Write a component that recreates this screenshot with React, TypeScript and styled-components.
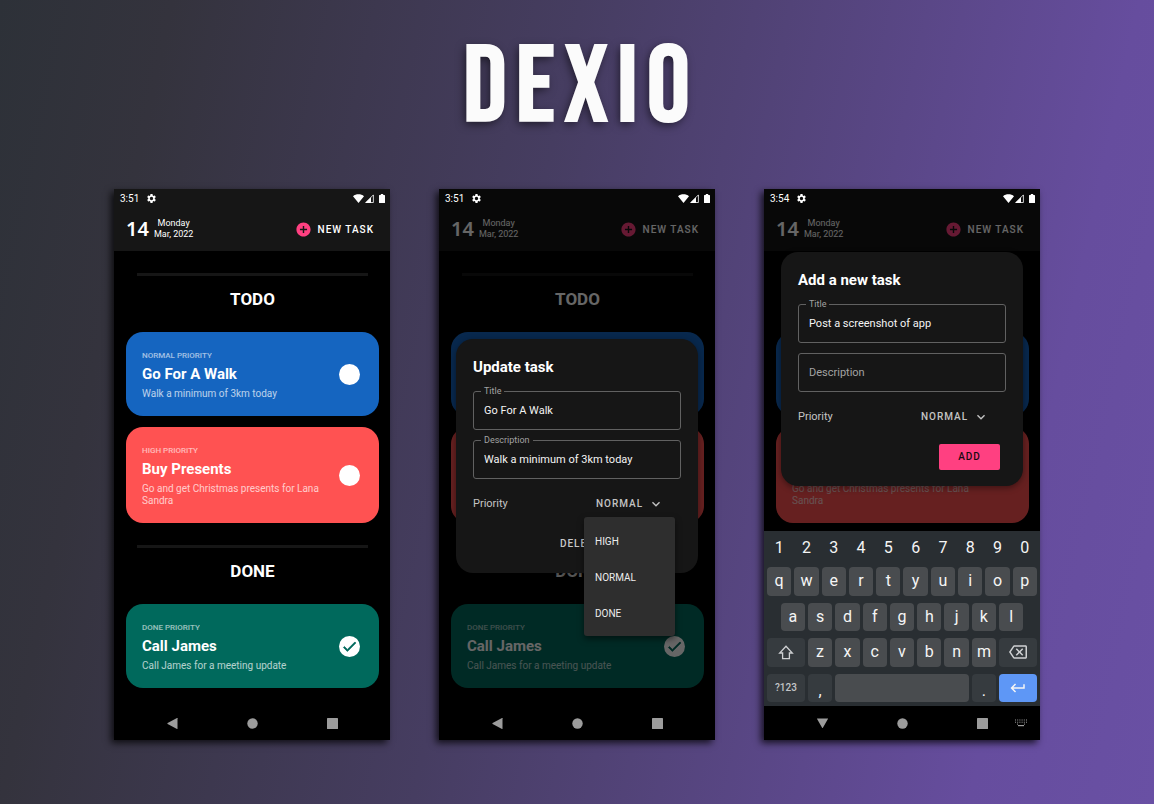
import React, { useId } from 'react';
import styled, { createGlobalStyle, css } from 'styled-components';
import {
  MdSettings,
  MdAddCircle,
  MdExpandMore,
  MdOutlineBackspace,
  MdKeyboardReturn,
  MdCheck,
} from 'react-icons/md';

const GlobalStyle = createGlobalStyle`
  *, *::before, *::after { box-sizing: border-box; }
  body {
    margin: 0;
    font-family: Roboto, "Liberation Sans", sans-serif;
    color: #fff;
  }
  h1, h2, h3, p { margin: 0; }
  button, input, select { font: inherit; color: inherit; margin: 0; padding: 0; border: 0; background: none; }
  svg { display: block; flex: none; }
`;

const Page = styled.main`
  min-height: 100vh;
  padding: 34px 16px 64px;
  background: linear-gradient(102deg, #2d3138 0%, #34333d 13%, #463d61 44%, #664d9e 86%, #6950a4 100%);
`;

const Brand = styled.h1`
  padding-bottom: 45px;
  padding-left: 8px;
  text-align: center;
  font-family: "Bebas Neue", "Liberation Sans Narrow", "Roboto Condensed", "Liberation Sans", sans-serif;
  font-size: 108px;
  font-weight: 400;
  line-height: 110px;
  letter-spacing: 9px;
  color: #fbfbfb;
  -webkit-text-stroke: 2px #fbfbfb;
  text-shadow: -2px 3px 10px rgba(0, 0, 0, 0.6);
`;

const Phones = styled.div`
  display: grid;
  grid-template-columns: repeat(3, minmax(0, 276px));
  justify-content: center;
  column-gap: 49px;
`;

const PhoneFrame = styled.section`
  position: relative;
  display: flex;
  flex-direction: column;
  overflow: hidden;
  background: #000;
`;

const PhoneShadow = styled.div`
  display: grid;
  box-shadow: -3px 3px 7px rgba(0, 0, 0, 0.75);
`;

const StatusBar = styled.div`
  position: relative;
  z-index: 2;
  display: flex;
  align-items: center;
  justify-content: space-between;
  height: 18px;
  padding: 0 5px 0 6px;
  font-size: 10px;
`;

const StatusGroup = styled.div<{ $gap: number }>`
  display: flex;
  align-items: center;
  gap: ${(p) => p.$gap}px;
`;

const TopPanel = styled.div`
  background: #161616;
  margin-top: -18px;
  padding-top: 18px;
`;

const AppBar = styled.header`
  display: flex;
  align-items: center;
  justify-content: space-between;
  height: 44px;
  padding: 0 16px 0 12px;
`;

const DateBlock = styled.div`
  display: flex;
  align-items: center;
  gap: 5px;
`;

const DayNumber = styled.span`
  font-family: "Noto Sans", sans-serif;
  font-size: 20px;
  font-weight: 600;
  line-height: 24px;
`;

const DateText = styled.span`
  display: grid;
  font-size: 9px;
  line-height: 11px;
  text-align: center;
`;

const NewTaskButton = styled.button`
  display: flex;
  align-items: center;
  gap: 6px;
  font-size: 10px;
  font-weight: 500;
  letter-spacing: 1px;
  svg { color: #ff4081; }
`;

const Board = styled.div`
  flex: 1;
  padding: 22px 11px 18px 12px;
`;

const Divider = styled.hr`
  height: 3px;
  margin: 0 11px;
  border: 0;
  background: #161616;
`;

const SectionTitle = styled.h2`
  padding: 12px 0 22px;
  font-size: 17px;
  font-weight: 700;
  line-height: 22px;
  text-align: center;
`;

const Cards = styled.div`
  display: grid;
  gap: 11px;
  & + ${Divider} { margin-top: 22px; }
`;

const Card = styled.article<{ $color: string }>`
  display: flex;
  align-items: center;
  justify-content: space-between;
  gap: 16px;
  padding: 17px 19px 16px 16px;
  border-radius: 17px;
  background: ${(p) => p.$color};
  color: ${(p) => p.$color};
`;

const CardText = styled.div`
  display: grid;
  color: #fff;
`;

const CardPriority = styled.p`
  font-size: 8px;
  font-weight: 500;
  line-height: 14px;
  opacity: 0.6;
`;

const CardTitle = styled.h3`
  font-size: 15px;
  font-weight: 700;
  line-height: 22px;
`;

const CardDescription = styled.p`
  padding-top: 3px;
  font-size: 10px;
  line-height: 12px;
  opacity: 0.7;
`;

const Tick = styled.span`
  display: grid;
  place-items: center;
  > * { grid-area: 1 / 1; }
  svg { pointer-events: none; }
  svg path:not([fill='none']) { stroke: currentColor; stroke-width: 1; }
`;

const TickBox = styled.input`
  appearance: none;
  width: 21px;
  height: 21px;
  border-radius: 50%;
  background: #fff;
`;

const NavBar = styled.nav`
  position: relative;
  z-index: 2;
  display: grid;
  grid-template-columns: 1fr auto 1fr;
  align-items: center;
  height: 34px;
  padding-right: 13px;
  padding-left: 13px;
  background: #000;
  color: #9c9c9c;
`;

const NavButtons = styled.div`
  display: flex;
  grid-column: 2;
  gap: 69px;
`;

const IconButton = styled.button`
  display: grid;
  justify-self: end;
`;

const Scrim = styled.div`
  position: absolute;
  inset: 0;
  z-index: 1;
  display: grid;
  background: rgba(0, 0, 0, 0.6);
`;

const DialogArea = styled.div<{ $keyboard: boolean }>`
  display: grid;
  align-items: center;
  padding: 18px 17px ${(p) => (p.$keyboard ? 210 : 36)}px;
`;

const Dialog = styled.div`
  padding: 18px 17px 16px;
  border-radius: 17px;
  background: #161616;
  box-shadow: 0 2px 6px rgba(0, 0, 0, 0.4);
`;

const DialogTitle = styled.h2`
  margin-bottom: 14px;
  font-size: 15px;
  font-weight: 700;
  line-height: 20px;
`;

const Fields = styled.div`
  display: grid;
  gap: 10px;
`;

const Field = styled.div`
  position: relative;
  display: grid;
`;

const FieldLabel = styled.label`
  position: absolute;
  top: -5px;
  left: 8px;
  padding: 0 3px;
  background: #161616;
  color: #a2a2a2;
  font-size: 9px;
  line-height: 10px;
`;

const FieldInput = styled.input`
  width: 100%;
  height: 39px;
  padding: 1px 10px 0;
  border: 1px solid #616161;
  border-radius: 3px;
  font-size: 11px;
  color: #f4f4f4;
  &::placeholder { color: #a2a2a2; opacity: 1; }
`;

const PriorityRow = styled.div`
  display: flex;
  align-items: center;
  justify-content: space-between;
  padding: 12px 6px 14px 0;
  font-size: 11px;
  color: #c4c4c4;
`;

const PriorityControl = styled.div`
  position: relative;
  display: grid;
  align-items: center;
  width: 91px;
  > select, > svg { grid-area: 1 / 1; }
  > svg { justify-self: end; margin-right: 11px; pointer-events: none; }
`;

const PrioritySelect = styled.select`
  appearance: none;
  height: 26px;
  padding-left: 12px;
  font-size: 10px;
  font-weight: 500;
  letter-spacing: 1px;
`;

const Menu = styled.ul`
  position: absolute;
  top: 100%;
  left: 0;
  right: 0;
  margin: 0;
  padding: 7px 0 4px;
  list-style: none;
  border-radius: 3px;
  background: #2e2e2e;
  box-shadow: 0 3px 6px rgba(0, 0, 0, 0.5);
`;

const MenuItem = styled.li`
  padding-left: 11px;
  font-size: 10px;
  line-height: 36px;
  color: #ececec;
`;

const Actions = styled.div`
  display: grid;
  grid-template-columns: 1fr 61px;
  column-gap: 13px;
  padding-right: 6px;
`;

const ActionButton = styled.button<{ $primary?: boolean }>`
  height: 26px;
  border-radius: 2px;
  font-size: 10px;
  font-weight: 500;
  letter-spacing: 1px;
  ${(p) =>
    p.$primary
      ? css`
          grid-column: 2;
          background: #ff4081;
          color: #1a0a10;
        `
      : css`
          justify-self: end;
          color: #c8c8c8;
        `}
`;

const Keyboard = styled.div`
  position: absolute;
  z-index: 2;
  right: 0;
  bottom: 34px;
  left: 0;
  display: grid;
  grid-template-rows: 24px repeat(4, 1fr);
  gap: 7px;
  height: 175px;
  padding: 5px 3px 4px;
  background: #292e32;
`;

const KeyRow = styled.div`
  display: grid;
  grid-template-columns: repeat(20, 1fr);
  column-gap: 3px;
`;

const tones = {
  plain: 'transparent',
  letter: '#494c4f',
  special: '#363b3f',
  enter: '#5e97f6',
};

const Key = styled.button<{ $span?: number; $start?: number; $tone?: keyof typeof tones }>`
  display: grid;
  place-items: center;
  min-width: 0;
  grid-column: ${(p) => p.$start ?? 'auto'} / span ${(p) => p.$span ?? 2};
  border-radius: 4px;
  background: ${(p) => tones[p.$tone ?? 'letter']};
  font-size: 16px;
  line-height: 16px;
  color: #f5f5f5;
`;

const SymbolsKey = styled(Key)`
  font-size: 10px;
  font-weight: 500;
  color: #c3c5c7;
`;

const PunctuationKey = styled(Key)`
  padding-top: 6px;
`;

type Task = { level: string; title: string; text: string; color: string; done?: boolean };

const todo: Task[] = [
  { level: 'NORMAL PRIORITY', title: 'Go For A Walk', text: 'Walk a minimum of 3km today', color: '#1565c0' },
  { level: 'HIGH PRIORITY', title: 'Buy Presents', text: 'Go and get Christmas presents for Lana Sandra', color: '#ff5252' },
];

const done: Task[] = [
  { level: 'DONE PRIORITY', title: 'Call James', text: 'Call James for a meeting update', color: '#00695c', done: true },
];

const WifiIcon = () => (
  <svg width="11" height="9" viewBox="0 0 11 9" fill="#fff" aria-hidden="true">
    <path d="M0 2.2C3 -.4 8 -.4 11 2.2L5.5 9Z" />
  </svg>
);

const SignalIcon = () => (
  <svg width="9" height="9" viewBox="0 0 9 9" aria-hidden="true">
    <path d="M.8 8.5H8.4V.9Z" fill="none" stroke="#fff" strokeWidth="0.8" />
    <path d="M.2 9H6V3.2Z" fill="#fff" />
  </svg>
);

const BatteryIcon = () => (
  <svg width="6" height="9" viewBox="0 0 6 9" fill="#fff" aria-hidden="true">
    <path d="M1.8 0h2.4v1H5.4q.6 0 .6.6v6.8q0 .6-.6.6H.6Q0 9 0 8.4V1.6Q0 1 .6 1h1.2Z" />
  </svg>
);

const BackIcon = ({ down }: { down?: boolean }) => (
  <svg width="11" height="11" viewBox="0 0 11 11" fill="currentColor" aria-hidden="true">
    <path d={down ? 'M.2 .4H10.8Q11.2 .5 10.9 .9L5.9 9.8Q5.5 10.3 5.1 9.8L.1 .9Q-.1 .5 .2 .4Z' : 'M10.5 .2V10.8Q10.4 11.1 10 10.9L.6 5.9Q.2 5.5 .6 5.1L10 .1Q10.4 -.1 10.5 .2Z'} />
  </svg>
);

const HomeIcon = () => (
  <svg width="11" height="11" viewBox="0 0 11 11" fill="currentColor" aria-hidden="true">
    <circle cx="5.5" cy="5.5" r="5.2" />
  </svg>
);

const RecentsIcon = () => (
  <svg width="11" height="11" viewBox="0 0 11 11" fill="currentColor" aria-hidden="true">
    <rect width="11" height="11" rx="0.6" />
  </svg>
);

const KeyboardIcon = () => (
  <svg width="12" height="8" viewBox="0 0 12 8" fill="currentColor" aria-hidden="true">
    {[0, 2.2, 4.4, 6.6, 8.8, 11].map((x) => (
      <g key={x}>
        <rect x={x} y="0.5" width="1" height="1" />
        <rect x={x} y="2.7" width="1" height="1" />
      </g>
    ))}
    <rect x="2" y="4.6" width="1" height="1" />
    <rect x="9" y="4.6" width="1" height="1" />
    <rect x="3" y="6" width="6" height="1.2" />
  </svg>
);

const ShiftIcon = () => (
  <svg width="16" height="15" viewBox="0 0 16 15" fill="none" stroke="#cfd1d3" strokeWidth="1.3" strokeLinejoin="miter" aria-hidden="true">
    <path d="M8 1.3L14.3 8H11.4V13.7H4.6V8H1.7Z" />
  </svg>
);

function TaskCard({ task }: { task: Task }) {
  return (
    <Card $color={task.color}>
      <CardText>
        <CardPriority>{task.level}</CardPriority>
        <CardTitle>{task.title}</CardTitle>
        <CardDescription>{task.text}</CardDescription>
      </CardText>
      <Tick>
        <TickBox type="checkbox" aria-label={task.title} defaultChecked={task.done} />
        {task.done && <MdCheck size={17} />}
      </Tick>
    </Card>
  );
}

function TextField({ label, value }: { label: string; value?: string }) {
  const id = useId();
  return (
    <Field>
      {value && <FieldLabel htmlFor={id}>{label}</FieldLabel>}
      <FieldInput id={id} type="text" defaultValue={value} placeholder={label} aria-label={label} />
    </Field>
  );
}

function PriorityField({ open }: { open?: boolean }) {
  const id = useId();
  return (
    <PriorityRow>
      <label htmlFor={id}>Priority</label>
      <PriorityControl>
        <PrioritySelect id={id} defaultValue="NORMAL">
          <option>HIGH</option>
          <option>NORMAL</option>
          <option>DONE</option>
        </PrioritySelect>
        <MdExpandMore size={16} />
        {open && (
          <Menu>
            <MenuItem>HIGH</MenuItem>
            <MenuItem>NORMAL</MenuItem>
            <MenuItem>DONE</MenuItem>
          </Menu>
        )}
      </PriorityControl>
    </PriorityRow>
  );
}

function SoftKeyboard() {
  const letters = (row: string, start?: number) =>
    row.split('').map((c, i) => (
      <Key key={c} $start={i === 0 ? start : undefined}>
        {c}
      </Key>
    ));
  return (
    <Keyboard>
      <KeyRow>
        {'1234567890'.split('').map((c) => (
          <Key key={c} $tone="plain">
            {c}
          </Key>
        ))}
      </KeyRow>
      <KeyRow>{letters('qwertyuiop')}</KeyRow>
      <KeyRow>{letters('asdfghjkl', 2)}</KeyRow>
      <KeyRow>
        <Key $span={3} $tone="special" aria-label="Shift">
          <ShiftIcon />
        </Key>
        {letters('zxcvbnm')}
        <Key $span={3} $tone="special" aria-label="Backspace">
          <MdOutlineBackspace size={18} color="#cfd1d3" />
        </Key>
      </KeyRow>
      <KeyRow>
        <SymbolsKey $span={3} $tone="special">
          ?123
        </SymbolsKey>
        <PunctuationKey $tone="special">,</PunctuationKey>
        <Key $span={10} aria-label="Space" />
        <PunctuationKey $tone="special">.</PunctuationKey>
        <Key $span={3} $tone="enter" aria-label="Enter">
          <MdKeyboardReturn size={18} />
        </Key>
      </KeyRow>
    </Keyboard>
  );
}

function Section({ title, tasks }: { title: string; tasks: Task[] }) {
  return (
    <>
      <Divider />
      <SectionTitle>{title}</SectionTitle>
      <Cards>
        {tasks.map((t) => (
          <TaskCard key={t.title} task={t} />
        ))}
      </Cards>
    </>
  );
}

function Phone({ time, keyboard = false, children }: { time: string; keyboard?: boolean; children?: React.ReactNode }) {
  return (
    <PhoneShadow>
      <PhoneFrame>
        <StatusBar>
          <StatusGroup $gap={7}>
            <span>{time}</span>
            <MdSettings size={11} />
          </StatusGroup>
          <StatusGroup $gap={1}>
            <WifiIcon />
            <StatusGroup $gap={5}>
              <SignalIcon />
              <BatteryIcon />
            </StatusGroup>
          </StatusGroup>
        </StatusBar>
        <TopPanel>
          <AppBar>
            <DateBlock>
              <DayNumber>14</DayNumber>
              <DateText>
                <span>Monday</span>
                <span>Mar, 2022</span>
              </DateText>
            </DateBlock>
            <NewTaskButton>
              <MdAddCircle size={17} />
              NEW TASK
            </NewTaskButton>
          </AppBar>
        </TopPanel>
        <Board>
          <Section title="TODO" tasks={todo} />
          {!keyboard && <Section title="DONE" tasks={done} />}
        </Board>
        {children && (
          <Scrim>
            <DialogArea $keyboard={keyboard}>{children}</DialogArea>
          </Scrim>
        )}
        {keyboard && <SoftKeyboard />}
        <NavBar>
          <NavButtons>
            <IconButton aria-label="Back">
              <BackIcon down={keyboard} />
            </IconButton>
            <IconButton aria-label="Home">
              <HomeIcon />
            </IconButton>
            <IconButton aria-label="Recents">
              <RecentsIcon />
            </IconButton>
          </NavButtons>
          {keyboard && (
            <IconButton aria-label="Switch keyboard">
              <KeyboardIcon />
            </IconButton>
          )}
        </NavBar>
      </PhoneFrame>
    </PhoneShadow>
  );
}

export default function App() {
  return (
    <>
      <GlobalStyle />
      <Page>
        <Brand>DEXIO</Brand>
        <Phones>
          <Phone time="3:51" />
          <Phone time="3:51">
            <Dialog role="dialog" aria-label="Update task">
              <DialogTitle>Update task</DialogTitle>
              <Fields>
                <TextField label="Title" value="Go For A Walk" />
                <TextField label="Description" value="Walk a minimum of 3km today" />
              </Fields>
              <PriorityField open />
              <Actions>
                <ActionButton>DELETE</ActionButton>
              </Actions>
            </Dialog>
          </Phone>
          <Phone time="3:54" keyboard>
            <Dialog role="dialog" aria-label="Add a new task">
              <DialogTitle>Add a new task</DialogTitle>
              <Fields>
                <TextField label="Title" value="Post a screenshot of app" />
                <TextField label="Description" />
              </Fields>
              <PriorityField />
              <Actions>
                <ActionButton $primary>ADD</ActionButton>
              </Actions>
            </Dialog>
          </Phone>
        </Phones>
      </Page>
    </>
  );
}
